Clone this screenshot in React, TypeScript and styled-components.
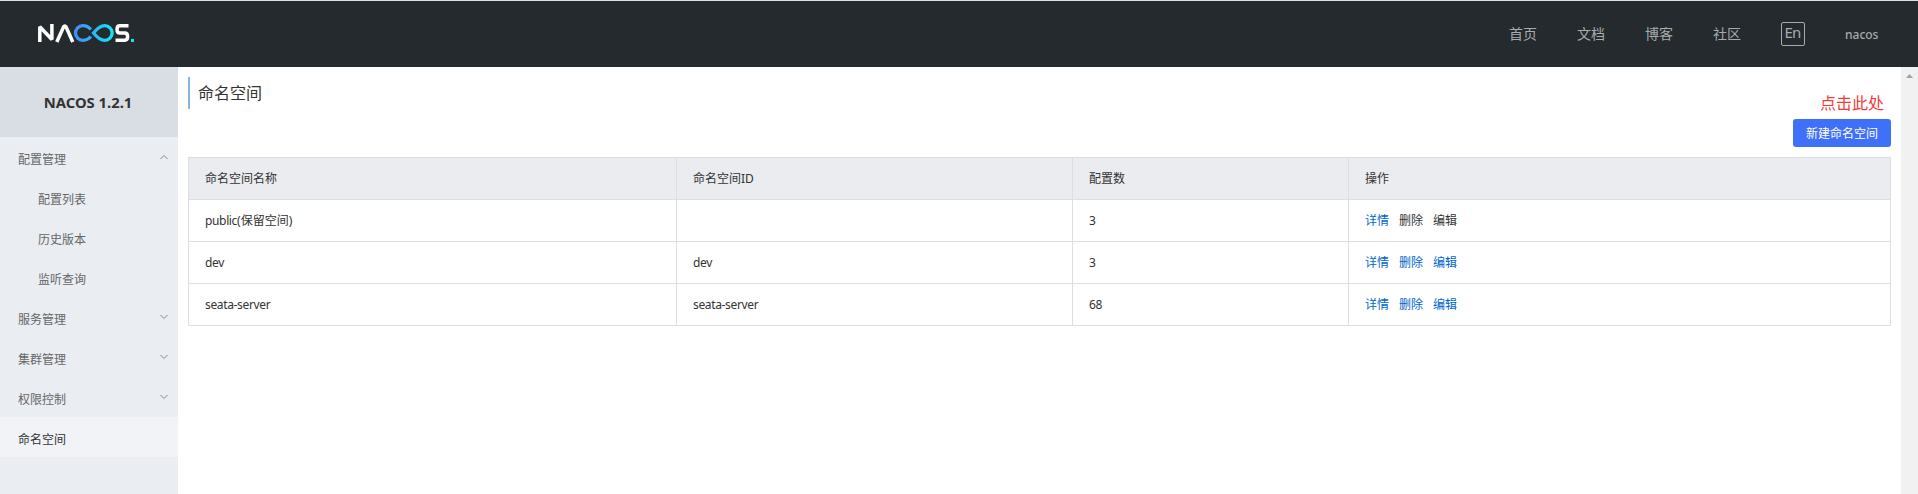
import React from 'react';
import styled, { createGlobalStyle } from 'styled-components';

const Global = createGlobalStyle`
  * { box-sizing: border-box; }
  body { margin: 0; background: #fff; overflow: hidden; color: #333;
    font: 12px/18px "Noto Sans", "Noto Sans CJK SC", sans-serif; }
`;
const Page = styled.div`height: 494px; display: flex; flex-direction: column;`;
const Header = styled.header`
  height: 67px; flex: none; background: #252a2f; border-top: 1px solid #dcdfe3;
  display: flex; align-items: center; justify-content: space-between; padding: 0 40px 0 36px;
`;
const Logo = styled.svg`display: block; width: 102px; height: 26px;`;
const Nav = styled.nav`display: flex; align-items: center; gap: 40px; height: 24px;`;
const NavLink = styled.a`
  color: #a8aaac; font-size: 14px; line-height: 24px; white-space: nowrap;
`;
const Lang = styled.span`
  width: 24px; height: 24px; border: 1px solid #a8aaac; border-radius: 2px; color: #a8aaac;
  font-size: 15px; line-height: 19px; text-align: center; letter-spacing: -0.8px; padding-right: 1px;
`;
const User = styled.span`
  color: #a8aaac; font-size: 12px; font-weight: 500; line-height: 24px; width: 33px; padding-top: 2px;
`;
const Body = styled.div`flex: 1; display: flex; min-height: 0;`;
const Side = styled.aside`width: 178px; flex: none; background: #eaedf2;`;
const Version = styled.div`
  height: 70px; background: #d9dde4; text-align: center; font-weight: 700; font-size: 14.8px; line-height: 70px;
  padding-right: 2px;
`;
const Item = styled.div<{ $sub?: boolean; $active?: boolean }>`
  height: 40px; display: flex; align-items: center; justify-content: space-between;
  padding: 6px 9px 0 ${p => (p.$sub ? 38 : 18)}px;
  color: ${p => (p.$active ? '#333' : '#666')};
  background: ${p => (p.$active ? '#f1f3f7' : 'transparent')};
`;
const Arrow = styled.svg`width: 10px; height: 8px; margin-bottom: 6px;`;
const Main = styled.main`flex: 1; padding: 10px 10px 0;`;
const Title = styled.h1`
  margin: 0; height: 32px; border-left: 2px solid #86b6e0; padding-left: 8px;
  font-weight: 400; font-size: 16px; line-height: 33px;
`;
const Tools = styled.div`
  height: 48px; margin-top: -14px; display: flex; flex-direction: column; align-items: flex-end; gap: 8px;
`;
const Hint = styled.span`color: #f53a36; font-size: 16px; line-height: 16px; margin-right: 7px;`;
const Create = styled.button`
  width: 98px; height: 28px; flex: none; border: 0; border-radius: 3px; background: #3f70fa; color: #fff;
  padding: 2px 0 0; font: inherit; line-height: 26px;
`;
const Table = styled.div`margin-top: 14px; border: 1px solid #dcdee3; border-bottom: 0;`;
const Row = styled.div<{ $head?: boolean }>`
  display: grid; grid-template-columns: 488px 396px 276px 1fr; height: 42px;
  border-bottom: 1px solid #dcdee3;
  background: ${p => (p.$head ? '#ebecf0' : '#fff')};
`;
const Cell = styled.div`
  padding-left: 16px; line-height: 42px; border-right: 1px solid #dcdee3;
  &:last-child { border-right: 0; }
`;
const Latin = styled.span`letter-spacing: -0.35px;`;
const Actions = styled.span`display: inline-flex; gap: 10px;`;
const Action = styled.a<{ $off?: boolean }>`color: ${p => (p.$off ? '#333' : '#06c')};`;
const Scroll = styled.div`
  width: 17px; flex: none; background: #f1f1f1; display: flex; justify-content: center; padding-top: 7px;
`;
const Up = styled.svg`width: 7px; height: 4px;`;

const menu = [
  { t: '配置管理', a: 'up' }, { t: '配置列表', sub: true }, { t: '历史版本', sub: true }, { t: '监听查询', sub: true },
  { t: '服务管理', a: 'down' }, { t: '集群管理', a: 'down' }, { t: '权限控制', a: 'down' }, { t: '命名空间', active: true },
];
const rows = [
  { name: 'public', note: '(保留空间)', id: '', count: '3', locked: true },
  { name: 'dev', id: 'dev', count: '3' },
  { name: 'seata-server', id: 'seata-server', count: '68' },
];

export default function App() {
  return (
    <Page>
      <Global />
      <Header>
        <Logo viewBox="0 0 102 26">
          <defs>
            <linearGradient id="loop" gradientUnits="userSpaceOnUse" x1="38" y1="0" x2="77" y2="0">
              <stop offset="0" stopColor="#4489fb" /><stop offset="1" stopColor="#13e5f5" />
            </linearGradient>
          </defs>
          <g fill="none" stroke="#fff" strokeWidth="3.500">
            <path d="M3.800 21V5.800L15.900 18.500V3" strokeLinejoin="bevel" />
            <path d="M20.800 21L27.500 6Q28.800 3.800 30.100 6L36.800 21" />
            <path d="M92.500 4.800H84Q81 4.800 81 8.400T84 12H88.800Q91.600 12 91.600 15.600T88.800 19.200H79.500" />
          </g>
          <g fill="none" stroke="url(#loop)" strokeWidth="3.300">
            <path d="M54.800 8.500C52 5.300 49.500 4.700 46.800 4.700A7.300 7.300 0 0 0 46.800 19.300C49.500 19.300 52 18.700 54.800 15.500" />
            <path d="M57.500 12C61.500 7 65 4.700 68.800 4.700A7.300 7.300 0 0 1 68.800 19.300C65 19.300 61.500 17 57.500 12Z" />
          </g>
          <rect x="95" y="18" width="3" height="3" fill="#13e5f5" />
        </Logo>
        <Nav>
          {['首页', '文档', '博客', '社区'].map(t => <NavLink key={t}>{t}</NavLink>)}
          <Lang>En</Lang>
          <User>nacos</User>
        </Nav>
      </Header>
      <Body>
        <Side>
          <Version>NACOS 1.2.1</Version>
          {menu.map(m => (
            <Item key={m.t} $sub={m.sub} $active={m.active}>
              {m.t}
              {m.a && (
                <Arrow viewBox="0 0 10 8">
                  <path d={m.a === 'up' ? 'M1.500 6L5 2.500L8.500 6' : 'M1.500 2L5 5.500L8.500 2'} fill="none" stroke="#888" />
                </Arrow>
              )}
            </Item>
          ))}
        </Side>
        <Main>
          <Title>命名空间</Title>
          <Tools>
            <Hint>点击此处</Hint>
            <Create>新建命名空间</Create>
          </Tools>
          <Table>
            <Row $head>
              {['命名空间名称', '命名空间ID', '配置数', '操作'].map(t => <Cell key={t}>{t}</Cell>)}
            </Row>
            {rows.map(r => (
              <Row key={r.name}>
                <Cell><Latin>{r.name}</Latin>{r.note}</Cell>
                <Cell><Latin>{r.id}</Latin></Cell>
                <Cell><Latin>{r.count}</Latin></Cell>
                <Cell>
                  <Actions>
                    <Action>详情</Action>
                    <Action $off={r.locked}>删除</Action>
                    <Action $off={r.locked}>编辑</Action>
                  </Actions>
                </Cell>
              </Row>
            ))}
          </Table>
        </Main>
        <Scroll><Up viewBox="0 0 7 4"><path d="M3.500 0L7 4H0Z" fill="#a3a3a3" /></Up></Scroll>
      </Body>
    </Page>
  );
}
